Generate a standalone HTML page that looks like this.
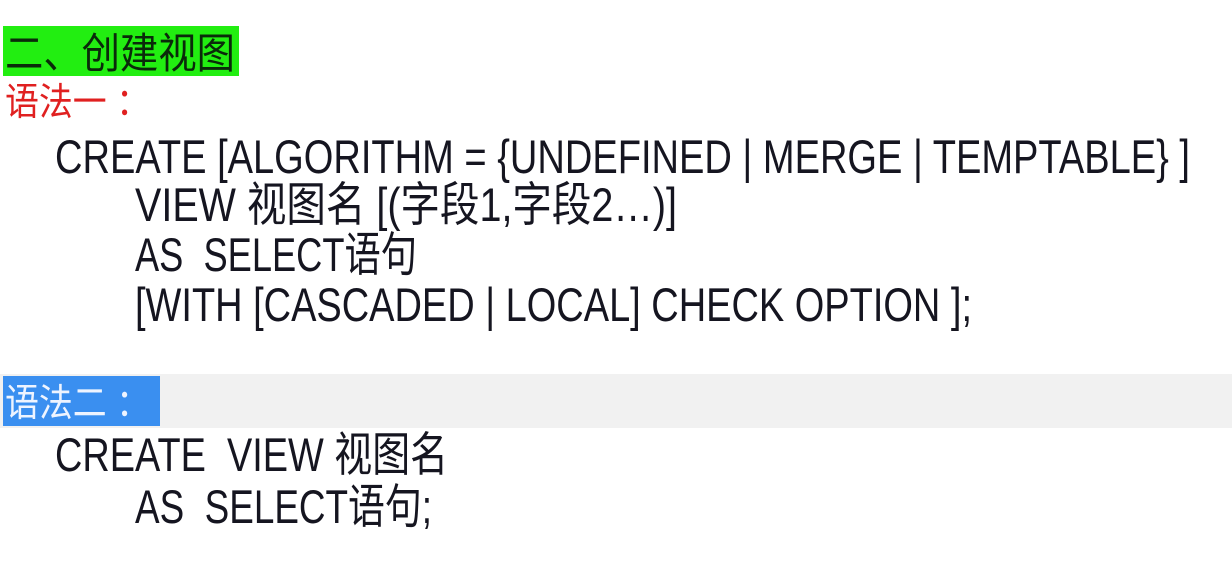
<!DOCTYPE html>
<html><head><meta charset="utf-8"><style>
html,body{margin:0;padding:0;background:#fff;width:1232px;height:564px;overflow:hidden}
svg{display:block}
text{font-family:"Liberation Sans","Noto Sans CJK SC",sans-serif;fill:#151520;white-space:pre}
</style></head><body>
<svg width="1232" height="564" viewBox="0 0 1232 564" xml:space="preserve">
<rect x="0" y="0" width="1232" height="564" fill="#fff"/>
<rect x="0" y="374" width="1232" height="54" fill="#f1f1f1"/>
<rect x="3" y="26" width="236" height="50" fill="#22ee11"/>
<rect x="3" y="376" width="157" height="50" fill="#3a8ff0"/>
<text x="5" y="68" font-size="42" textLength="230" lengthAdjust="spacingAndGlyphs" style="fill:#0a2a0a">二、创建视图</text>
<text x="5" y="115" font-size="38" textLength="145" lengthAdjust="spacingAndGlyphs" style="fill:#e02020">语法一 ：</text>
<text x="55" y="173" font-size="47" textLength="1135" lengthAdjust="spacingAndGlyphs">CREATE [ALGORITHM = {UNDEFINED | MERGE | TEMPTABLE} ]</text>
<text x="135" y="221" font-size="47" textLength="542" lengthAdjust="spacingAndGlyphs">VIEW 视图名 [(字段1,字段2…)]</text>
<text x="135" y="271" font-size="47" textLength="282" lengthAdjust="spacingAndGlyphs">AS  SELECT语句</text>
<text x="135" y="321" font-size="47" textLength="837" lengthAdjust="spacingAndGlyphs">[WITH [CASCADED | LOCAL] CHECK OPTION ];</text>
<text x="5" y="416" font-size="38" textLength="145" lengthAdjust="spacingAndGlyphs" style="fill:#eef4ff">语法二 ：</text>
<text x="55" y="471" font-size="47" textLength="393" lengthAdjust="spacingAndGlyphs">CREATE  VIEW 视图名</text>
<text x="135" y="523" font-size="47" textLength="297" lengthAdjust="spacingAndGlyphs">AS  SELECT语句;</text>
</svg>
</body></html>
